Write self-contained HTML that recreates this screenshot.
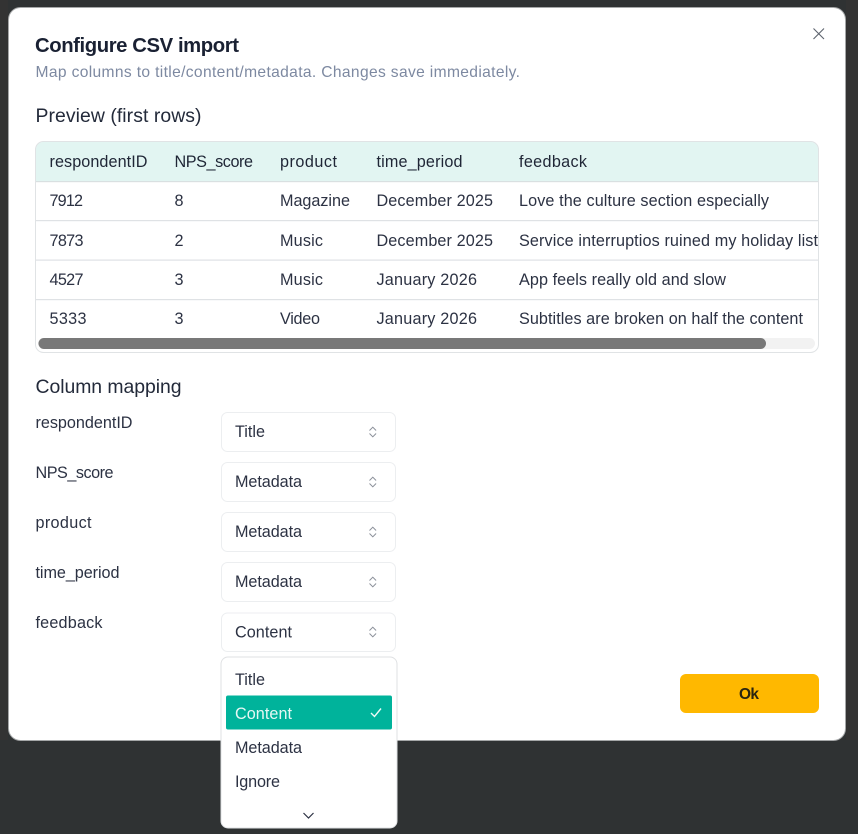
<!DOCTYPE html>
<html><head><meta charset="utf-8"><title>Configure CSV import</title>
<style>
html,body{margin:0;padding:0;background:#2f3233;width:858px;height:834px;overflow:hidden}
svg{display:block;filter:blur(0.35px)}
text{font-family:"Liberation Sans",sans-serif;font-size:16.2px;fill:#2c3243}
.t{font-size:20.3px;font-weight:700;fill:#1a2133}
.s{font-size:15.6px;fill:#7d89a1}
.h{font-size:19.4px;fill:#232a3a}
.th{fill:#1f2636}
.w{fill:#e6f7f4}
</style></head><body>
<svg width="858" height="834" viewBox="0 0 858 834" xmlns="http://www.w3.org/2000/svg">
<defs><clipPath id="c"><rect x="36" y="142" width="782" height="209" rx="7"/></clipPath></defs>
<rect width="858" height="834" fill="#2f3233"/>
<rect x="846" y="0" width="12" height="740" fill="#333333"/>
<rect x="0" y="0" width="8" height="740" fill="#333333"/>
<rect x="8.500" y="7.500" width="837" height="733" rx="12" fill="#fff" stroke="#a5a7a8"/>
<text class="t" x="35" y="52" textLength="204">Configure CSV import</text>
<text class="s" x="35.500" y="77" textLength="484.500">Map columns to title/content/metadata. Changes save immediately.</text>
<path d="M813.500 28.500l10.500 10.500M824 28.500l-10.500 10.500" stroke="#5d636e" stroke-width="1.100" fill="none"/>
<text class="h" x="35.500" y="122" textLength="166">Preview (first rows)</text>

<g clip-path="url(#c)">
<rect x="36" y="142" width="782" height="39" fill="#e2f5f2"/>
<rect x="36" y="181" width="782" height="1.200" fill="#d9e0e1"/>
<rect x="36" y="220" width="782" height="1.200" fill="#dfe2e5"/>
<rect x="36" y="259.500" width="782" height="1.200" fill="#dfe2e5"/>
<rect x="36" y="299" width="782" height="1.200" fill="#dfe2e5"/>
<text class="th" x="49.500" y="167" textLength="98">respondentID</text>
<text class="th" x="174.500" y="167" textLength="78.500">NPS_score</text>
<text class="th" x="280" y="167" textLength="57">product</text>
<text class="th" x="376.500" y="167" textLength="86">time_period</text>
<text class="th" x="519" y="167" textLength="68">feedback</text>

<text x="49.500" y="206" textLength="33.500">7912</text>
<text x="174.500" y="206" textLength="9">8</text>
<text x="280" y="206" textLength="70">Magazine</text>
<text x="376.500" y="206" textLength="116.500">December 2025</text>
<text x="519" y="206" textLength="250">Love the culture section especially</text>

<text x="49.500" y="246" textLength="34">7873</text>
<text x="174.500" y="246" textLength="9">2</text>
<text x="280" y="246" textLength="43">Music</text>
<text x="376.500" y="246" textLength="116.500">December 2025</text>
<text x="519" y="246" textLength="299">Service interruptios ruined my holiday list</text>

<text x="49.500" y="285" textLength="34">4527</text>
<text x="174.500" y="285" textLength="9">3</text>
<text x="280" y="285" textLength="43">Music</text>
<text x="376.500" y="285" textLength="100.500">January 2026</text>
<text x="519" y="285" textLength="207">App feels really old and slow</text>

<text x="49.500" y="324" textLength="37">5333</text>
<text x="174.500" y="324" textLength="9">3</text>
<text x="280" y="324" textLength="40">Video</text>
<text x="376.500" y="324" textLength="100.500">January 2026</text>
<text x="519" y="324" textLength="284">Subtitles are broken on half the content</text>

<rect x="38" y="338" width="777" height="11" rx="5.500" fill="#f2f2f2"/>
<rect x="38.500" y="338" width="727.500" height="11" rx="5.500" fill="#787878"/>
</g>
<rect x="35.500" y="141.500" width="783" height="211" rx="8" fill="none" stroke="#e0e3e5"/>

<text class="h" x="35.500" y="393" textLength="146">Column mapping</text>

<text x="35.500" y="428" textLength="97">respondentID</text>
<text x="35.500" y="478" textLength="78">NPS_score</text>
<text x="35.500" y="528" textLength="56">product</text>
<text x="35.500" y="578" textLength="84">time_period</text>
<text x="35.500" y="628" textLength="67">feedback</text>

<g fill="#fff" stroke="#eceef0">
<rect x="221.500" y="412.500" width="174" height="39" rx="6"/>
<rect x="221.500" y="462.500" width="174" height="39" rx="6"/>
<rect x="221.500" y="512.500" width="174" height="39" rx="6"/>
<rect x="221.500" y="562.500" width="174" height="39" rx="6"/>
<rect x="221.500" y="613" width="174" height="38.500" rx="6"/>
</g>
<text x="235" y="437" textLength="30">Title</text>
<text x="235" y="487" textLength="67">Metadata</text>
<text x="235" y="537" textLength="67">Metadata</text>
<text x="235" y="587" textLength="67">Metadata</text>
<text x="235" y="637.500" textLength="57">Content</text>
<g fill="none" stroke="#8b909a" stroke-width="1">
<path d="M369.500 430.500l3.300-3.300 3.300 3.300M369.500 433.500l3.300 3.300 3.300-3.300"/>
<path d="M369.500 480.500l3.300-3.300 3.300 3.300M369.500 483.500l3.300 3.300 3.300-3.300"/>
<path d="M369.500 530.500l3.300-3.300 3.300 3.300M369.500 533.500l3.300 3.300 3.300-3.300"/>
<path d="M369.500 580.500l3.300-3.300 3.300 3.300M369.500 583.500l3.300 3.300 3.300-3.300"/>
<path d="M369.500 630.500l3.300-3.300 3.300 3.300M369.500 633.500l3.300 3.300 3.300-3.300"/>
</g>

<rect x="221" y="657" width="176" height="171" rx="7" fill="#fff" stroke="#dfe1e3"/>
<rect x="226" y="695.500" width="166" height="34" rx="2" fill="#00b39b"/>
<text x="235" y="685" textLength="30">Title</text>
<text class="w" x="235" y="719" textLength="57">Content</text>
<text x="235" y="753" textLength="67">Metadata</text>
<text x="235" y="787" textLength="45">Ignore</text>
<path d="M371 713l3.500 3.500 6.500-8" fill="none" stroke="#eefaf7" stroke-width="1.400"/>
<path d="M303.500 813l5 5 5-5" fill="none" stroke="#2c3243" stroke-width="1.200"/>

<rect x="680" y="674" width="139" height="39" rx="6" fill="#ffb800"/>
<text x="739" y="699" textLength="20" style="font-weight:700;fill:#2a2410;font-size:15.5px">Ok</text>
</svg>
</body></html>
